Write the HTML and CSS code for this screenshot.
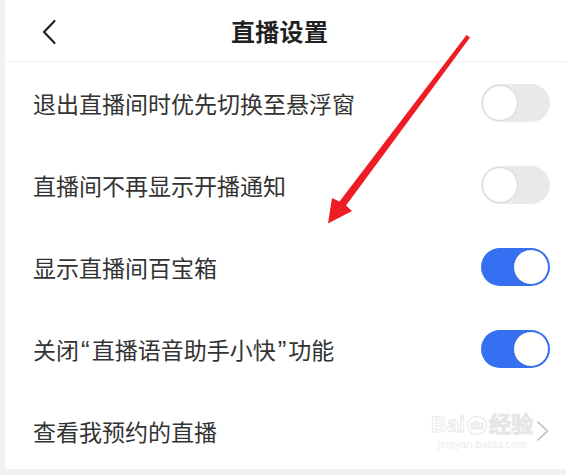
FILE: index.html
```html
<!DOCTYPE html>
<html lang="zh-CN">
<head>
    <meta charset="UTF-8">
    <meta name="viewport" content="width=device-width, initial-scale=1.0">
    <title>直播设置</title>
    <link rel="stylesheet" href="styles.css">
</head>
<body>
    <div class="page">
        <div class="header">
            <svg class="back" width="16" height="26" viewBox="0 0 16 26">
                <path d="M13.5 2 L3 13 L13.5 24" fill="none" stroke="#222" stroke-width="2.2" stroke-linecap="round" stroke-linejoin="round"/>
            </svg>
            <h1>直播设置</h1>
        </div>

        <div class="row">
            <span class="label">退出直播间时优先切换至悬浮窗</span>
            <span class="switch"></span>
        </div>
        <div class="row">
            <span class="label">直播间不再显示开播通知</span>
            <span class="switch"></span>
        </div>
        <div class="row">
            <span class="label">显示直播间百宝箱</span>
            <span class="switch on"></span>
        </div>
        <div class="row">
            <span class="label">关闭<span class="q">“</span>直播语音助手小快<span class="q">”</span>功能</span>
            <span class="switch on"></span>
        </div>
        <div class="row">
            <span class="label">查看我预约的直播</span>
            <div class="watermark">
                <div class="wm-logo">Bai<span class="wm-du">du</span>经验</div>
                <div class="wm-url">jingyan.baidu.com</div>
            </div>
            <svg class="more" width="14" height="22" viewBox="0 0 14 22">
                <path d="M2 2 L11.5 11 L2 20" fill="none" stroke="#bdbdbd" stroke-width="1.6" stroke-linecap="round" stroke-linejoin="round"/>
            </svg>
        </div>
    </div>

    <svg class="arrow" width="566" height="475" viewBox="0 0 566 475">
        <polygon points="466.5,35 470,37.5 346,205.5 352,211 328,223.5 332,198 339.5,201.5" fill="#ee1c25"/>
    </svg>
</body>
</html>
```

FILE: styles.css
```css
body {
    margin: 0;
    background-color: #f1f1f1;
    font-family: "Noto Sans CJK SC", "Noto Sans", sans-serif;
    color: #333;
    width: 566px;
    height: 475px;
    overflow: hidden;
    position: relative;
}
.page {
    margin-left: 5px;
    height: 469px;
    background-color: #fff;
    overflow: hidden;
}
.header {
    height: 61px;
    border-bottom: 1px solid #efefef;
    display: flex;
    align-items: center;
    padding-left: 36px;
}
.back {
    margin-top: 2px;
}
h1 {
    margin: 0 0 1px 174px;
    font-size: 24px;
    font-weight: bold;
    color: #222;
    letter-spacing: 0.3px;
}
.row {
    height: 82px;
    display: flex;
    align-items: center;
    padding: 0 16px 0 28px;
    position: relative;
}
.label {
    flex: 1;
    font-size: 23px;
    color: #333;
}
.q {
    font-family: "Liberation Sans", sans-serif;
    font-size: 26px;
    line-height: 1;
    margin: 0 2px;
}
.switch {
    width: 69px;
    height: 38px;
    border-radius: 19px;
    background-color: #e9e9e9;
    position: relative;
    box-sizing: border-box;
}
.switch::after {
    content: "";
    position: absolute;
    left: 1px;
    top: 1px;
    width: 36px;
    height: 36px;
    border-radius: 50%;
    background-color: #fff;
    box-sizing: border-box;
    border: 1px solid #d6d6d6;
}
.switch.on {
    background-color: #3570f3;
}
.switch.on::after {
    left: auto;
    right: 1px;
    border: 1px solid #2f63de;
}
.watermark {
    position: absolute;
    left: 426px;
    top: 24px;
    text-align: center;
    line-height: 1;
}
.wm-logo {
    font-family: "Liberation Sans", sans-serif;
    font-size: 22px;
    font-weight: bold;
    color: #fff;
    -webkit-text-stroke: 0.8px #e6e6e6;
}
.wm-du {
    display: inline-block;
    font-size: 11px;
    border: 1px solid #e6e6e6;
    border-radius: 50%;
    padding: 3px 2px;
    margin: 0 2px;
    color: #fff;
    vertical-align: 3px;
}
.wm-url {
    font-family: "Liberation Sans", sans-serif;
    font-size: 11px;
    color: #ececec;
    margin-top: 3px;
}
.arrow {
    position: absolute;
    left: 0;
    top: 0;
    pointer-events: none;
}
```
